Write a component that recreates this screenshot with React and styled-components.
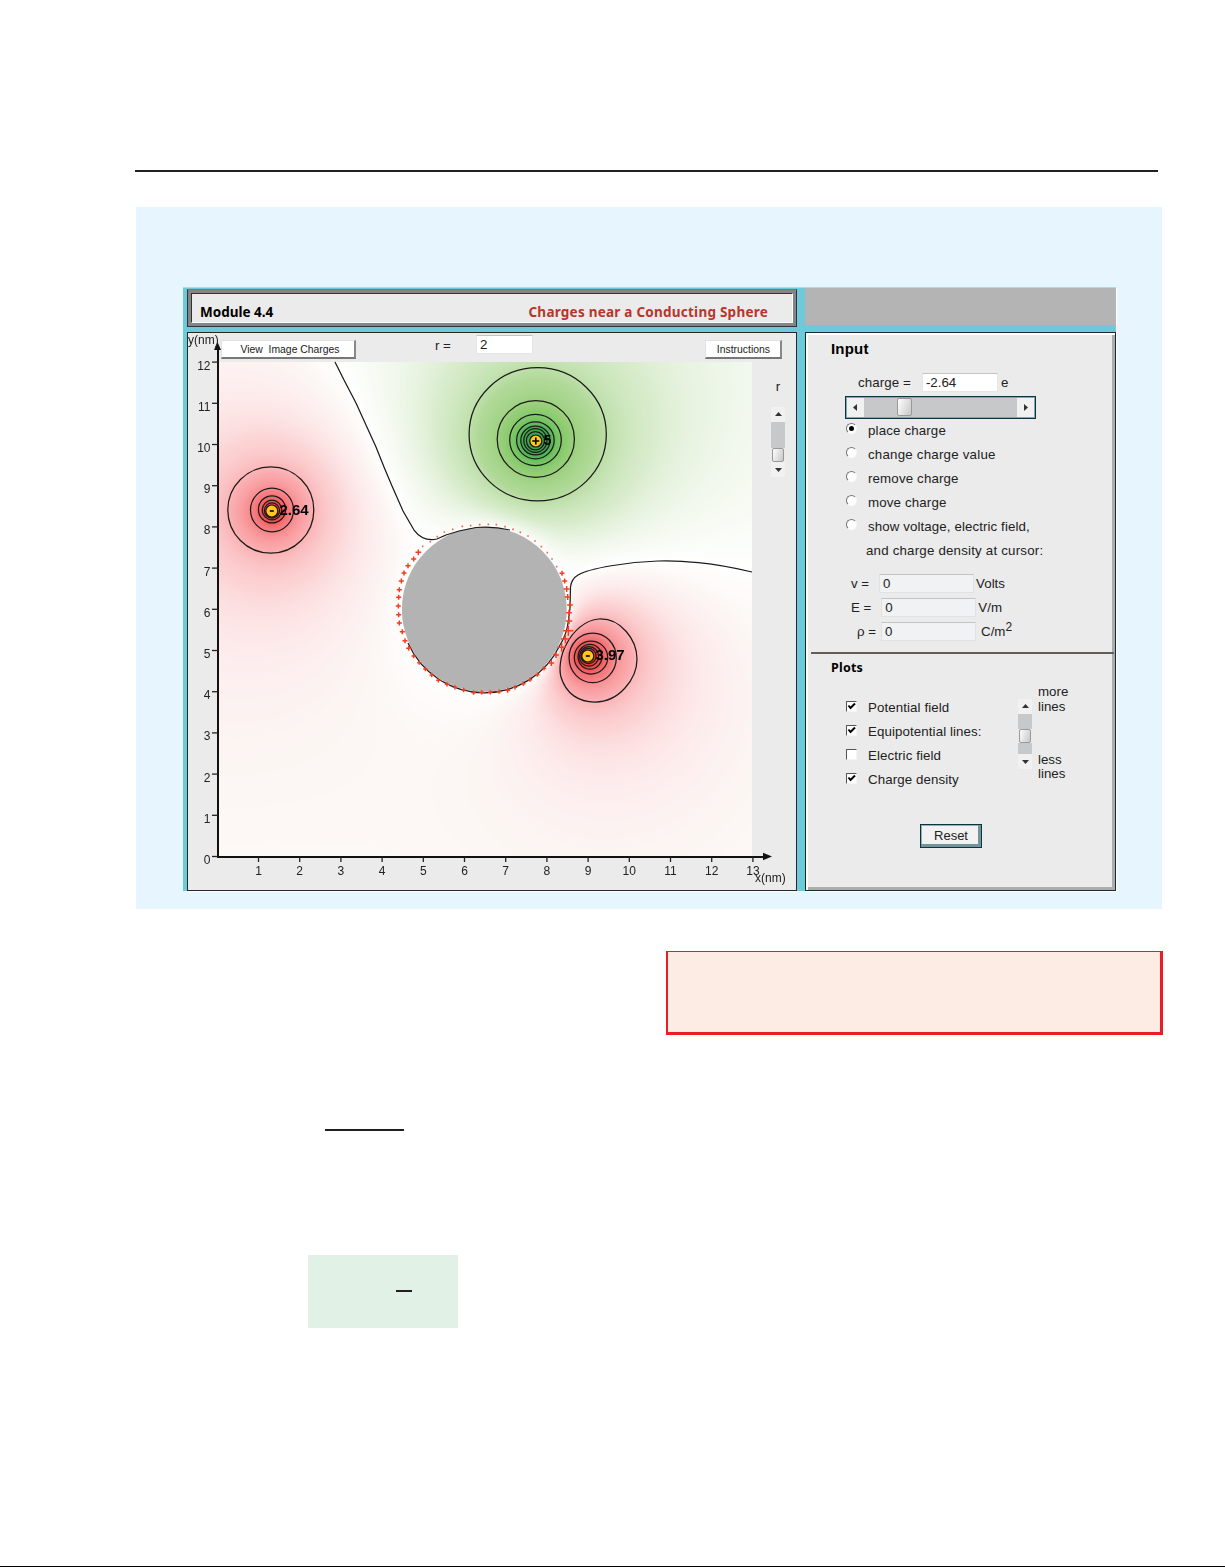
import React, { useEffect, useRef } from 'react';
import styled, { createGlobalStyle, css } from 'styled-components';

const Global = createGlobalStyle`
  * { box-sizing: border-box; }
  html, body { margin: 0; padding: 0; background: #fff; }
  body { font-family: "Liberation Sans", Arial, sans-serif; color: #222; overflow: hidden; }
`;

/* ---------- physics of the plot ---------- */
const W = 534;
const H = 494;
const CHARGES = [
  { x: 53.5, y: 149, q: -2.64, label: '2.64' },
  { x: 317.5, y: 79, q: 5, label: '5' },
  { x: 369.5, y: 294, q: -3.97, label: '3.97' },
];
const SPHERE = { x: 266.3, y: 247.8, r: 82.6 };
const UNIT = 41.15;

const SOURCES = CHARGES.flatMap(({ x, y, q }) => {
  const dx = x - SPHERE.x;
  const dy = y - SPHERE.y;
  const d2 = dx * dx + dy * dy;
  const k = (SPHERE.r * SPHERE.r) / d2;
  return [
    { x, y, q },
    { x: SPHERE.x + dx * k, y: SPHERE.y + dy * k, q: (-q * SPHERE.r) / Math.sqrt(d2) },
  ];
});

const potential = (x, y) =>
  SOURCES.reduce((v, s) => v + (s.q * UNIT) / Math.max(1, Math.hypot(x - s.x, y - s.y)), 0);

const RED = [
  [0, [255, 255, 255]], [0.06, [254, 252, 251]], [0.2, [252, 246, 243]], [0.45, [253, 235, 236]],
  [1, [252, 212, 213]], [2.4, [250, 170, 173]], [5, [246, 128, 132]], [10, [238, 84, 84]], [16, [228, 60, 56]],
];
const GREEN = [
  [0, [255, 255, 255]], [0.1, [251, 253, 249]], [0.4, [240, 247, 235]], [1, [216, 236, 204]],
  [2.5, [176, 217, 152]], [5, [149, 206, 118]], [9, [110, 194, 96]], [15, [60, 165, 80]],
];
const shade = (v) => {
  const scale = v < 0 ? RED : GREEN;
  const a = Math.abs(v);
  for (let i = 1; i < scale.length; i += 1) {
    if (a <= scale[i][0]) {
      const [a0, c0] = scale[i - 1];
      const [a1, c1] = scale[i];
      const t = (a - a0) / (a1 - a0);
      return c0.map((c, n) => c + (c1[n] - c) * t);
    }
  }
  return scale[scale.length - 1][1];
};

/* ---------- page ---------- */
const Page = styled.main`
  width: 1225px; height: 1567px; background: #fff; padding-top: 170px;
  display: flex; flex-direction: column; align-items: flex-start;
`;
const Rule = styled.div`
  width: ${(p) => p.$w}px; height: 2px; background: #231f20;
  margin: ${(p) => p.$m || '0'}; flex: none;
`;
const BlueBox = styled.section`
  margin: 35px 0 0 136px; width: 1026px; height: 702px; flex: none;
  background: #e6f5fe; padding: 80px 0 0 47px;
`;
const RedBox = styled.section`
  margin: 42px 0 0 666px; width: 497px; height: 84px; flex: none;
  background: #fdece4; border: solid #ed1c24; border-width: 1px 3px 3px 2px;
`;
const GreenBox = styled.section`
  margin: 124px 0 0 308px; width: 150px; height: 73px; flex: none;
  background: #e1f1e6; padding: 35px 0 0 88px;
`;
const FootLine = styled.div`
  margin-top: auto; width: 1225px; height: 1px; background: #000; flex: none;
`;

const Applet = styled.div`
  width: 933px; height: 604px; background: #6ccadb; padding: 1px 0 0 4px;
  border-top: 1px solid #a5dfea; box-shadow: 1px 1px 0 #fbfdff;
  display: grid; grid-template-columns: 611px 311px; column-gap: 7px;
  grid-template-rows: 38px 559px; row-gap: 5px;
`;
const TitleBar = styled.header`
  height: 38px; width: 610px; border: 1px solid #333; background: #858585; padding: 3px;
  border-top-color: #777;
`;
const TitleInner = styled.div`
  height: 30px; background: #ebebeb; border: 1px solid #fff;
  border-top: 1px solid #333; border-left: 1px solid #333;
  display: flex; justify-content: space-between; align-items: center;
  padding: 8px 24px 0 8px;
`;
const Title = styled.h1`
  margin: 0; font: bold ${(p) => p.$size}px/16px "Noto Sans", "Open Sans", sans-serif;
  color: ${(p) => p.$color}; letter-spacing: ${(p) => p.$ls || 0}px; white-space: nowrap;
`;
const Blank = styled.div`background: #b4b4b4; height: 37px; margin-top: -1px;`;

const PlotPanel = styled.section`
  border: 1px solid #2a2624; background: #ebebeb; height: 559px; width: 610px;
`;
const Toolbar = styled.div`
  height: 29px; display: flex; align-items: flex-start; padding-left: 33px;
`;
const Raised = styled.div`
  height: ${(p) => p.$h || 19}px; width: ${(p) => p.$w}px; background: #fff; flex: none;
  border-right: 2px solid #888; border-bottom: 2px solid #777;
  border-top: 1px solid #e2e2e2; border-left: 1px solid #e2e2e2;
  font-size: 10.4px; line-height: 18px; text-align: center; white-space: pre;
  padding-left: ${(p) => p.$pad || 0}px;
  margin-top: ${(p) => p.$top || 0}px; margin-left: ${(p) => p.$left || 0}px;
`;
const Text = styled.span`
  font-size: ${(p) => p.$size || 13.3}px; white-space: pre; line-height: 15px;
  margin-left: ${(p) => p.$left || 0}px; margin-top: ${(p) => p.$top || 0}px;
  letter-spacing: ${(p) => p.$ls || 0}px;
  ${(p) => p.$bold && css`font-weight: bold; color: #000;`}
`;
const Field = styled.div`
  height: 19px; width: ${(p) => p.$w}px; flex: none;
  background: ${(p) => (p.$dim ? '#f0f2f4' : '#fff')};
  border: 1px solid ${(p) => (p.$dim ? '#dfe3e6' : '#e6e6e6')}; border-top-color: #c4c4c4;
  font-size: 13.3px; line-height: 18px; padding-left: 3px;
  margin-left: ${(p) => p.$left || 0}px; margin-top: ${(p) => p.$top || 0}px;
`;
const Body = styled.div`display: flex; height: 528px;`;
const PlotArea = styled.div`position: relative; width: 564px; height: 528px; padding-left: 30px; flex: none;`;
const FieldCanvas = styled.canvas`display: block; width: ${W}px; height: ${H}px;`;
const Overlay = styled.svg`
  position: absolute; left: 0; top: 0; overflow: visible; 
  text { font-family: "Liberation Sans", Arial, sans-serif; fill: #222; }
`;
const Side = styled.div`
  width: 44px; display: flex; flex-direction: column; align-items: center; gap: 13px; padding: 17px 0 0 8px;
`;

const VScroll = styled.div`
  width: 14px; height: ${(p) => p.$h}px; display: flex; flex-direction: column; flex: none;
`;
const Arrow = styled.div`
  flex: none; width: ${(p) => (p.$horizontal ? '17px' : '14px')}; height: ${(p) => (p.$horizontal ? '100%' : '15px')};
  background: #f1f1f1; display: flex; align-items: center; justify-content: center;
`;
const Track = styled.div`flex: ${(p) => p.$grow}; background: #c6c8c9;`;
const Thumb = styled.div`
  flex: none; width: ${(p) => p.$w || 12}px; height: ${(p) => p.$h || 14}px; margin: 0 auto;
  border: 1px solid #999; border-radius: 2px; background: linear-gradient(110deg, #fdfdfd, #c8c8c8);
`;
const HScroll = styled.div`
  width: 191px; height: 23px; margin: 2px 0 -1px 39px; border: 1px solid #14323c; flex: none;
  box-shadow: inset 0 0 0 1px #7ba9b2; padding: 1px; display: flex; background: #c4c8ca;
`;

const InputPanel = styled.section`
  height: 559px; border: 1px solid #1c2a30; background: #ebebeb;
  box-shadow: inset 2px 2px 0 #fff, inset -3px -3px 0 #a9aeac;
  display: flex; flex-direction: column;
`;
const Row = styled.div`
  height: 24px; display: flex; align-items: center; flex: none;
  padding-left: ${(p) => p.$pad || 0}px; margin-top: ${(p) => p.$top || 0}px;
`;
const Radio = styled.span`
  width: 11px; height: 11px; border-radius: 50%; background: #fff; flex: none;
  border: 1px solid; border-color: #777 #f8f8f8 #f8f8f8 #777; margin: -4px 11px 0 0;
  display: flex; align-items: center; justify-content: center;
  &::after { content: ''; width: 5px; height: 5px; border-radius: 50%; background: ${(p) => (p.$on ? '#000' : 'transparent')}; }
`;
const Check = styled.span`
  width: 11px; height: 11px; background: #fff; flex: none; margin: -2px 11px 0 0;
  border: 1px solid; border-color: #555 #f4f4f4 #f4f4f4 #555; display: flex;
`;
const Divider = styled.div`height: 2px; margin: 9px 1px 0 5px; background: #625e5b; flex: none;`;
const Plots = styled.div`display: flex; height: 112px; flex: none;`;
const Checks = styled.div`width: 212px; padding: 15px 0 0 40px;`;
const Lines = styled.div`
  display: flex; flex-direction: column; justify-content: space-between;
  font-size: 13.3px; line-height: 14.6px; height: 97px; padding-left: 6px; margin-top: 5px;
`;
const Reset = styled.div`
  margin: 32px 0 0 114px; width: 62px; height: 24px; flex: none;
  border: 1px solid #14323c; box-shadow: inset -3px -3px 0 #71969a, inset 1px 1px 0 #8bb3b8;
  background: #f2f2f2; font-size: 13px; line-height: 22px; text-align: center;
`;

const Tri = ({ dir }) => {
  const d = { up: 'M0 5 L3.5 1 L7 5Z', down: 'M0 2 L3.5 6 L7 2Z', left: 'M5 0 L1 3.5 L5 7Z', right: 'M2 0 L6 3.5 L2 7Z' }[dir];
  return <svg width="7" height="7"><path d={d} fill="#333" /></svg>;
};

const Scroller = ({ h, before, after }) => (
  <VScroll $h={h}>
    <Arrow><Tri dir="up" /></Arrow>
    <Track $grow={before} />
    <Thumb />
    <Track $grow={after} />
    <Arrow><Tri dir="down" /></Arrow>
  </VScroll>
);

/* ring centres and radii around each charge, in panel coordinates */
const RINGS = [
  [82.8, 148, 43, 43.2], [84, 148, 21.5, 21.8], [84, 147.4, 13.6, 13.6], [84, 148, 9.8, 9.8], [84, 148.5, 7.6, 7.6],
  [349.7, 72.3, 68.6, 66.6], [347.8, 77, 38.6, 38.4], [347.5, 78, 25.8, 25.6], [347.4, 78.3, 18.8, 18.5],
  [347.4, 78.5, 14.6, 14.4], [347.4, 78.5, 11.6, 11.8], [347.4, 78.7, 9, 9.2],
  [404.7, 295.8, 23.6, 24.8], [403, 295.5, 16.7, 16.5], [402, 294.8, 11.9, 12.4], [401, 294.4, 9.6, 9.8], [400.5, 294, 7.6, 7.6],
];
/* [x, y, size] of each surface charge mark, in thirds of a pixel from (192, 148) */
const MARKS = [
  [281,548,3],[305,547,3],[331,547,3],[357,545,3],[383,541,3.5],[405,532,3],[430,521,3],[450,509,3],[472,494,3],
  [492,475,3],[514,459,4],[528,435,4],[545,412,6],[556,387,6],[565,362,7],[567,333,4.5],[567,308,4],[570,285,4],
  [563,261,4],[560,237,4],[554,213,3.5],[546,190,3.5],[530,170,1],[516,147,1],[502,128,1],[484,110,1],[465,93,1],
  [444,78,1],[421,67,1],[399,58,1],[375,50,1],[349,44,1],[325,43,1],[299,44,1],[272,47,1],[247,49,1],[218,58,1],
  [193,66,1],[172,80,1],[151,95,1],[128,109,1],[115,127,4],[101,147,3.5],[84,167,3.5],[72,189,3.5],[64,213,3.5],
  [58,239,3.5],[56,262,3.5],[55,288,3.5],[56,314,3.5],[58,339,3.5],[67,365,3.5],[75,392,3.5],[86,415,3.5],
  [101,438,3],[118,458,3],[136,477,3],[155,495,3],[175,511,3],[201,523,3],[225,532,3],[251,540,3],
];
const range = (n) => Array.from({ length: n }, (_, i) => i);

const Plot = () => {
  const ref = useRef(null);
  useEffect(() => {
    const ctx = ref.current.getContext('2d');
    const img = ctx.createImageData(W, H);
    for (let y = 0; y < H; y += 1) {
      for (let x = 0; x < W; x += 1) {
        const c = shade(potential(x, y));
        const i = (y * W + x) * 4;
        img.data[i] = c[0]; img.data[i + 1] = c[1]; img.data[i + 2] = c[2]; img.data[i + 3] = 255;
      }
    }
    ctx.putImageData(img, 0, 0);
  }, []);
  return (
    <PlotArea>
      <FieldCanvas ref={ref} width={W} height={H} />
      <Overlay width="564" height="528">
        <circle cx="296.3" cy="247.4" r="82.4" fill="#b3b3b3" />
        <g fill="none" stroke="#1d1a1a" strokeWidth="1.25">
          {RINGS.map(([x, y, rx, ry], i) => <ellipse key={i} cx={x} cy={y} rx={rx} ry={ry} />)}
          <path d="M449 297 C449 278 433 256 411 257 C397 258 385 269 378 283 C372 294 371 308 373 315 C378 332 391 340 407 340 C431 340 449 317 449 297Z" />
          <path d="M147 0 L156 18 L168 41 L178 63 L188 85 L196 105 L204 124 L215 149 L226 168 C232 176 239 179 249 177 L258 173 L271 169 L288 165.500 Q305 164 322 168" />
          <path d="M564 210 C535 203 505 198 470 199 C440 200 402 206 390 213 C385 216 383 220 382.500 225 L382 246 L380.500 258 Q379 272 372 283 A83.600 83.600 0 0 1 220 281" />
        </g>
        <g stroke="#f63c20" strokeWidth="1.5">
          {MARKS.map(([x, y, s], i) => {
            const cx = 192 + x / 3;
            const cy = 148 + y / 3;
            const r = s === 1 ? 0.8 : s * 0.72;
            return <path key={i} opacity={s === 1 ? 0.8 : 1} d={`M${cx - r} ${cy}H${cx + r}M${cx} ${cy - r}V${cy + r}`} />;
          })}
        </g>
        {CHARGES.map(({ x, y, q, label }) => (
          <g key={label}>
            <text x={x + 38} y={y + 4} fontSize={q > 0 ? 14 : 15} fontWeight="bold" style={{ fill: '#000' }}>{label}</text>
            <circle cx={x + 30.3} cy={y} r="6" fill="#ffc81e" stroke="#1c1208" strokeWidth="1.2" />
            <path d={q > 0 ? `M${x + 26.8} ${y}h7M${x + 30.3} ${y - 3.5}v7` : `M${x + 28.3} ${y}h4`} stroke="#000" strokeWidth="1.6" />
          </g>
        ))}
        <g stroke="#111" strokeWidth="2" fill="none">
          <path d="M30 -14V495H578" />
        </g>
        <path d="M29.500 -20 L33 -12 H26Z M584 494.500 L575 490.800 V498.200Z" fill="#111" />
        <g stroke="#222" strokeWidth="1.3">
          {range(13).map((n) => <path key={`y${n}`} d={`M24 ${494.5 - n * 41.2}h6`} />)}
          {range(13).map((n) => <path key={`x${n}`} d={`M${70.5 + n * 41.2} 495v5`} />)}
        </g>
        {range(13).map((n) => <text key={n} x="22.500" y={502 - n * 41.2} fontSize="12" textAnchor="end">{n}</text>)}
        {range(13).map((n) => <text key={n} x={70.5 + n * 41.2} y="512.5" fontSize="12" textAnchor="middle">{n + 1}</text>)}
        <text x="0" y="-18" fontSize="12">y(nm)</text>
        <text x="567" y="520" fontSize="12">x(nm)</text>
      </Overlay>
    </PlotArea>
  );
};

const RADIOS = [
  ['place charge', 0.15], ['change charge value', 0.22], ['remove charge', 0.15],
  ['move charge', 0.15], ['show voltage, electric field,', 0.1],
];
const CHECKS = [['Potential field', true], ['Equipotential lines:', true], ['Electric field', false], ['Charge density', true]];

export default function App() {
  return (
    <Page>
      <Global />
      <Rule $w={1023} $m="0 0 0 135px" />
      <BlueBox>
        <Applet>
          <TitleBar>
            <TitleInner>
              <Title $size={13.5} $color="#000">Module 4.4</Title>
              <Title $size={13.5} $ls={0.24} $color="#b8352b">Charges near a Conducting Sphere</Title>
            </TitleInner>
          </TitleBar>
          <Blank />
          <PlotPanel>
            <Toolbar>
              <Raised $w={135} $top={7} $pad={4}>View  Image Charges</Raised>
              <Text $left={79} $top={5}>r =</Text>
              <Field $w={57} $left={25} $top={2}>2</Field>
              <Raised $w={77} $left={172} $top={7} $pad={1}>Instructions</Raised>
            </Toolbar>
            <Body>
              <Plot />
              <Side>
                <Text>r</Text>
                <Scroller h={70} before={24} after={0} />
              </Side>
            </Body>
          </PlotPanel>
          <InputPanel>
            <Row $pad={25} $top={3}><Text $bold $size={15} $ls={0.2}>Input</Text></Row>
            <Row $pad={52} $top={10}>
              <Text $ls={0.1}>charge =</Text><Field $w={76} $left={11}>-2.64</Field><Text $left={3}>e</Text>
            </Row>
            <HScroll>
              <Arrow $horizontal><Tri dir="left" /></Arrow>
              <Track $grow={33} /><Thumb $w={15} $h={18} /><Track $grow={107} />
              <Arrow $horizontal><Tri dir="right" /></Arrow>
            </HScroll>
            {RADIOS.map(([label, ls], i) => (
              <Row key={label} $pad={40}><Radio $on={i === 0} /><Text $ls={ls}>{label}</Text></Row>
            ))}
            <Row $pad={60}><Text $ls={0.2}>and charge density at cursor:</Text></Row>
            <Row $pad={45} $top={9}><Text>v =</Text><Field $dim $w={95} $left={10}>0</Field><Text $left={2}>Volts</Text></Row>
            <Row $pad={45}><Text>E =</Text><Field $dim $w={95} $left={10}>0</Field><Text $left={2}>V/m</Text></Row>
            <Row $pad={51}><Text>ρ =</Text><Field $dim $w={95} $left={5}>0</Field><Text $left={5}>C/m</Text><Text $top={-7} $size={12}>2</Text></Row>
            <Divider />
            <Row $pad={25} $top={2}><Title $size={12.5} $ls={0.2} $color="#000">Plots</Title></Row>
            <Plots>
              <Checks>
                {CHECKS.map(([label, on]) => (
                  <Row key={label}>
                    <Check>{on && <svg width="9" height="9"><path d="M1.500 3.500 L3.500 6 L8 1.500" fill="none" stroke="#000" strokeWidth="2" /></svg>}</Check>
                    <Text $ls={0.1}>{label}</Text>
                  </Row>
                ))}
              </Checks>
              <Row $top={42}><Scroller h={70} before={13} after={10} /></Row>
              <Lines>
                <div>more<br />lines</div>
                <div>less<br />lines</div>
              </Lines>
            </Plots>
            <Reset>Reset</Reset>
          </InputPanel>
        </Applet>
      </BlueBox>
      <RedBox />
      <Rule $w={79} $m="94px 0 0 325px" />
      <GreenBox><Rule $w={16} /></GreenBox>
      <FootLine />
    </Page>
  );
}
